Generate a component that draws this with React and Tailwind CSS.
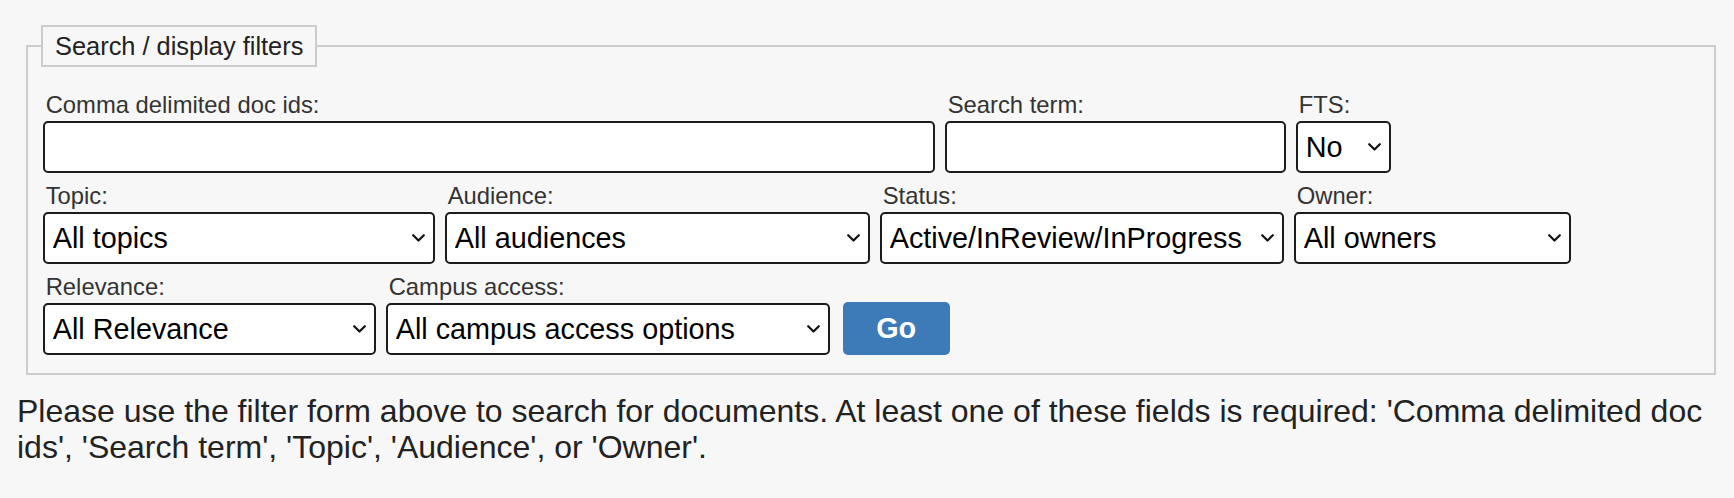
import { useState } from "react";

function Chevron() {
  return (
    <svg
      className="pointer-events-none absolute right-[10px] top-1/2 -translate-y-1/2"
      width="13"
      height="8"
      viewBox="0 0 13 8"
      fill="none"
    >
      <path d="M1.2 1.2 L6.5 6.5 L11.8 1.2" stroke="#111" strokeWidth="2.2" strokeLinecap="round" strokeLinejoin="round" />
    </svg>
  );
}

function Field({ label, width, children }) {
  return (
    <div className="flex flex-col" style={{ width }}>
      <label className="mb-[3px] pl-[3px] text-[23.8px] leading-[27px] text-[#333]">{label}</label>
      {children}
    </div>
  );
}

function Select({ value, onChange, options }) {
  return (
    <div className="relative">
      <select
        className="h-[52px] w-full appearance-none rounded-[5px] border-2 border-[#1c1c1c] bg-white pl-[8px] pr-[30px] text-[28.8px] leading-[34px] text-black outline-none"
        value={value}
        onChange={(e) => onChange(e.target.value)}
      >
        {options.map((o) => (
          <option key={o} value={o}>
            {o}
          </option>
        ))}
      </select>
      <Chevron />
    </div>
  );
}

export default function App() {
  const [filters, setFilters] = useState({
    docIds: "",
    term: "",
    fts: "No",
    topic: "All topics",
    audience: "All audiences",
    status: "Active/InReview/InProgress",
    owner: "All owners",
    relevance: "All Relevance",
    campus: "All campus access options",
  });

  const set = (key) => (v) => setFilters({ ...filters, [key]: v });

  const inputCls =
    "h-[52px] w-full rounded-[5px] border-2 border-[#1c1c1c] bg-white px-[8px] text-[28.8px] text-black outline-none";

  return (
    <div className="min-h-screen bg-[#f7f7f7] px-[17px] pt-[25px] font-['Liberation_Sans',Arial,sans-serif]">
      <fieldset className="ml-[9px] mr-[1px] border-2 border-[#cccccc]">
        <legend className="ml-[13px] border-2 border-[#cccccc] px-[12px] text-[25.4px] leading-[38px] text-[#222]">
          Search / display filters
        </legend>

        <div className="flex flex-col gap-[9px] pb-[18px] pl-[14.7px] pt-[24px]">
          <div className="flex items-end gap-[10px]">
            <Field label="Comma delimited doc ids:" width={892}>
              <input
                type="text"
                className={inputCls}
                value={filters.docIds}
                onChange={(e) => set("docIds")(e.target.value)}
              />
            </Field>
            <Field label="Search term:" width={341}>
              <input
                type="text"
                className={inputCls}
                value={filters.term}
                onChange={(e) => set("term")(e.target.value)}
              />
            </Field>
            <Field label="FTS:" width={95}>
              <Select value={filters.fts} onChange={set("fts")} options={["No", "Yes"]} />
            </Field>
          </div>

          <div className="flex items-end gap-[10px]">
            <Field label="Topic:" width={392}>
              <Select value={filters.topic} onChange={set("topic")} options={["All topics"]} />
            </Field>
            <Field label="Audience:" width={425}>
              <Select value={filters.audience} onChange={set("audience")} options={["All audiences"]} />
            </Field>
            <Field label="Status:" width={404}>
              <Select
                value={filters.status}
                onChange={set("status")}
                options={["Active/InReview/InProgress", "Active", "InReview", "InProgress"]}
              />
            </Field>
            <Field label="Owner:" width={277}>
              <Select value={filters.owner} onChange={set("owner")} options={["All owners"]} />
            </Field>
          </div>

          <div className="flex items-end gap-[10px]">
            <Field label="Relevance:" width={333}>
              <Select value={filters.relevance} onChange={set("relevance")} options={["All Relevance"]} />
            </Field>
            <Field label="Campus access:" width={444}>
              <Select value={filters.campus} onChange={set("campus")} options={["All campus access options"]} />
            </Field>
            <button className="ml-[3px] h-[53px] w-[107px] rounded-[5px] bg-[#3c7bb7] text-[28.8px] font-bold text-white">
              Go
            </button>
          </div>
        </div>
      </fieldset>

      <p className="mt-[17.5px] text-[32px] leading-[36px] text-[#222]">
        Please use the filter form above to search for documents. At least one of these fields is required: 'Comma
        delimited doc ids', 'Search term', 'Topic', 'Audience', or 'Owner'.
      </p>
    </div>
  );
}
